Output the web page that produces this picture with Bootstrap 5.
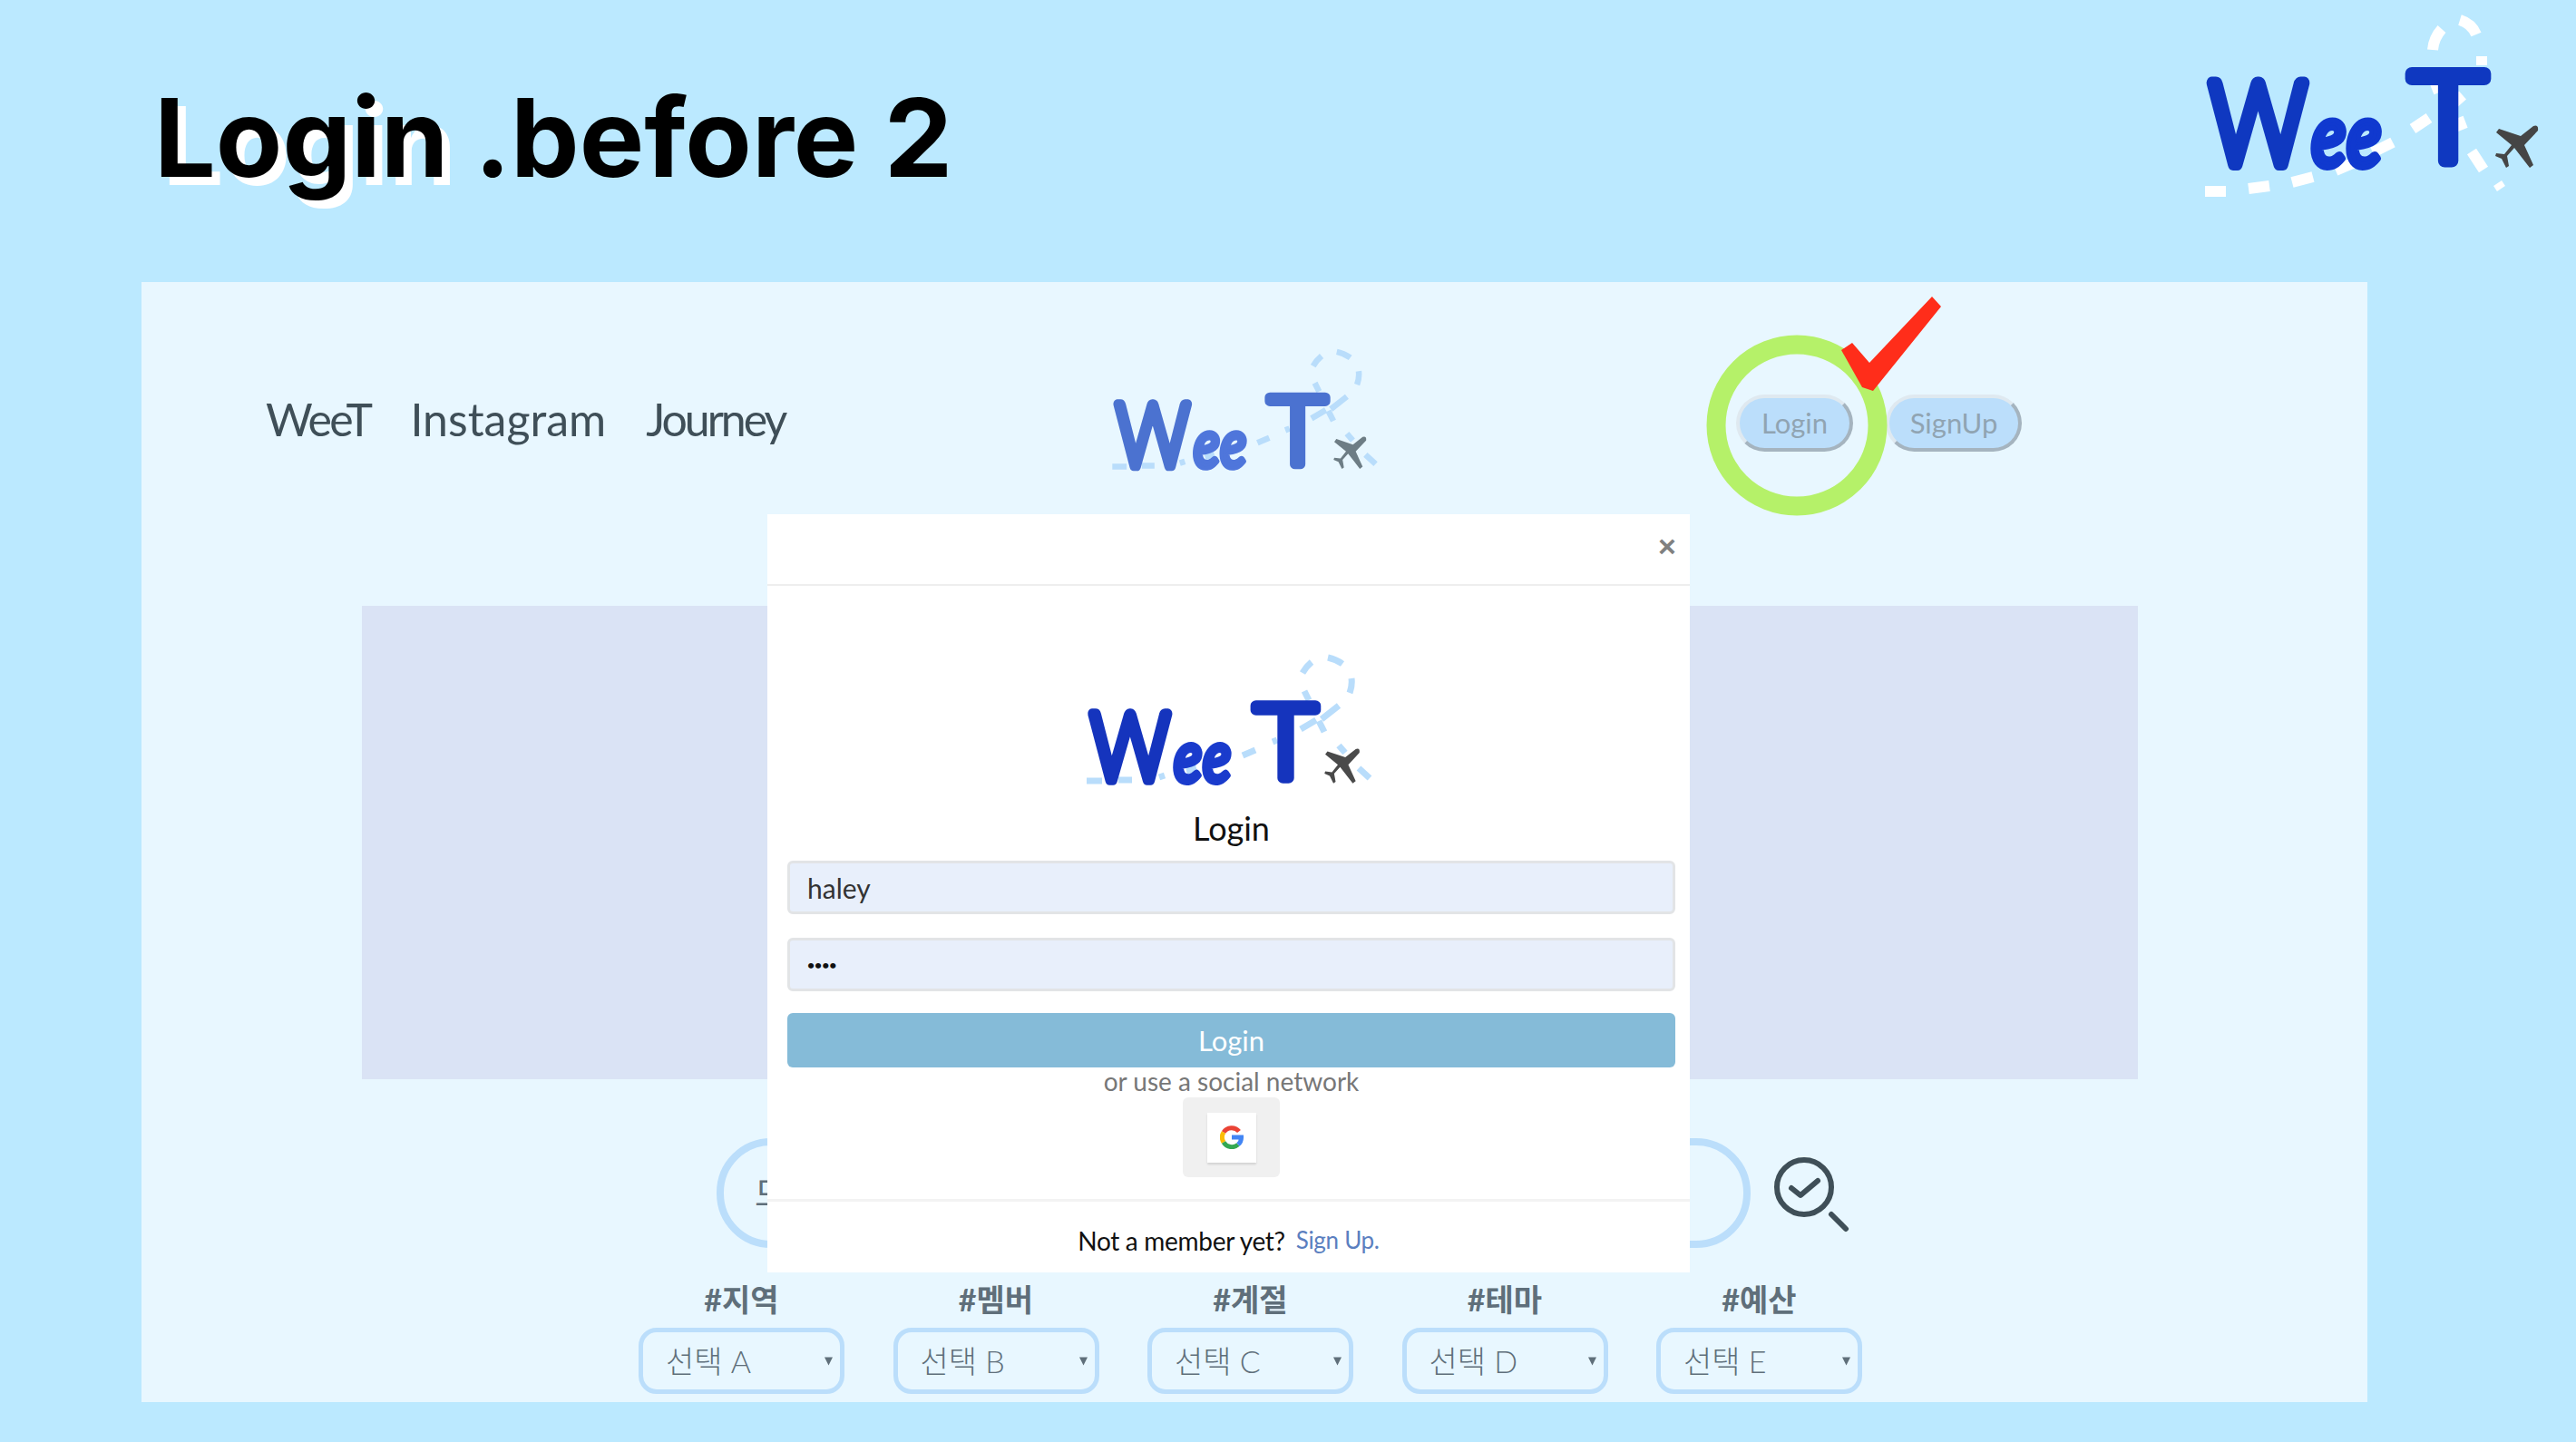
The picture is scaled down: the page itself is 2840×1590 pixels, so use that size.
<!DOCTYPE html>
<html lang="ko">

<head>
    <meta charset="UTF-8">
    <meta name="viewport" content="width=device-width, initial-scale=1.0">
    <title>Login .before 2</title>
    <link rel="stylesheet" href="https://cdn.jsdelivr.net/npm/bootstrap@5.3.2/dist/css/bootstrap.min.css">
    <script src="https://cdn.jsdelivr.net/npm/bootstrap@5.3.2/dist/js/bootstrap.bundle.min.js"></script>
    <style>
        body { background: #bbe9ff; font-family: Lato, "Noto Sans CJK KR", sans-serif; width: 2840px; height: 1590px; overflow: hidden; }
        .slide-head { height: 311px; padding-left: 170px; padding-right: 30px; }
        .slide-title { font-family: Inter, Lato, sans-serif; font-size: 120px; font-weight: 700; line-height: 1; margin: 92px 0 0; color: #000; }
        .slide-title span { text-shadow: 9px 9px 0 #fff; }
        .head-logo { width: 390px; height: 215px; margin-top: 10px; }
        .logo-letters text { font-family: Lato, sans-serif; stroke-linejoin: round; stroke-linecap: round; }

        .panel { position: relative; width: 2454px; height: 1235px; margin-left: 156px; background: #e8f7ff; }
        .top-nav { padding: 72px 0 0 137px; }
        .nav-links { width: 924px; padding-top: 49px; gap: 44px; }
        .nav-links a { font-size: 50px; line-height: 60px; color: #3f4f58; text-decoration: none; }
        .nav-links .tight-a { letter-spacing: -2.5px; }
        .nav-links .tight-b { letter-spacing: -3px; }
        .mid-logo { width: 307px; height: 140px; }
        .nav-btns { margin-left: 390px; padding-top: 52px; gap: 36px; }
        .nav-btn { height: 63px; font-size: 31px; line-height: 1; padding: 0; color: #90a4b2; background: #bbdefb; border: 4px solid; border-color: #dfe9f0 #a5b4bf #a5b4bf #dfe9f0; border-radius: 32px; }
        .nav-btn-login { width: 129px; }
        .nav-btn-signup { width: 150px; }
        .marks { position: absolute; left: 1719px; top: 9px; width: 270px; height: 255px; }

        .hero { height: 522px; margin: 145px 253px 0 243px; background: #dae3f5; }
        .search-row { margin: 65px 0 0 634px; }
        .search-pill { width: 1140px; height: 121px; border: 8px solid #bbdefb; border-radius: 60px; padding-left: 34px; font-size: 38px; color: #5f6f7a; }
        .search-icon { width: 95px; height: 95px; margin: 8px 0 0 20px; }
        .filters { margin: 37px 0 0 548px; gap: 53.500px; }
        .filter-col { width: 227px; }
        .filter-label { font-size: 34px; line-height: 40px; font-weight: 700; color: #5f6f7a; text-align: center; margin-bottom: 11px; }
        .filter-select { height: 73px; font-size: 34px; font-weight: 300; color: #5f6f7a; background-color: transparent; border: 5px solid #bbdefb; border-radius: 20px; padding: 0 0 0 25px; background-size: 9px 10px; background-position: right 8px center;
            background-image: url("data:image/svg+xml,%3Csvg xmlns='http://www.w3.org/2000/svg' viewBox='0 0 10 10'%3E%3Cpath d='M0 0h10L5 10z' fill='%235f6f7a'/%3E%3C/svg%3E"); }

        .login-modal { position: absolute; left: 690px; top: 256px; width: 1017px; height: 836px; overflow: hidden; z-index: 5; }
        .login-modal .modal-dialog { margin: 0; max-width: none; }
        .login-modal .modal-content { border: 0; border-radius: 0; height: 836px; }
        .login-modal .modal-header { height: 79px; padding: 0 15px 0 0; border-bottom: 2px solid #eee; border-radius: 0; justify-content: flex-end; }
        .close-x { border: 0; background: none; padding: 0; width: 20px; font-family: "Liberation Sans", sans-serif; font-size: 34px; font-weight: 700; line-height: 1; color: #808080; margin-top: -8px; }
        .login-modal .modal-body { padding: 74px 16px 0 22px; flex: 0 0 auto; height: 679px; border-bottom: 3px solid #f3f3f3; }
        .modal-logo { display: block; width: 330px; height: 150px; margin-left: 320px; }
        .login-title { font-size: 36px; line-height: 44px; color: #111; text-align: center; margin: 21px 0 14px; }
        .login-input { height: 59px; font-size: 30px; color: #333; background: #e8effb; border: 3px solid #e2e4e6; border-radius: 6px; padding: 0 19px; margin-bottom: 26px; }
        .login-input[type=password] { font-size: 14px; letter-spacing: 0; color: #111; font-weight: 700; }
        .login-submit { height: 60px; font-size: 31px; line-height: 1; color: #fff; background: #85bbd8; border: 0; border-radius: 6px; margin-top: -2px; padding-bottom: 6px; }
        .social-note { font-size: 28px; line-height: 30px; color: #777; text-align: center; margin-bottom: 3px; }
        .google-tile { width: 107px; height: 88px; background: #f0f0f0; border-radius: 6px; margin: 0 auto; }
        .google-btn { width: 54px; height: 55px; background: #fff; box-shadow: 0 2px 2px rgba(0, 0, 0, .12); }
        .login-modal .modal-footer { height: 75px; padding: 10px 0 0; border: 0; font-size: 28px; letter-spacing: -.3px; color: #111; }
        .login-modal .modal-footer a { font-size: 26px; color: #5b7fc0; text-decoration: none; margin-left: 8px; }
    </style>
</head>

<body>
    <svg width="0" height="0" class="position-absolute">
        <defs>
            <!-- letters and plane, units are the big logo's pixels -->
            <g id="logo-letters" class="logo-letters">
                <text x="56" y="181" font-size="126" font-weight="300" textLength="107" lengthAdjust="spacingAndGlyphs" stroke-width="14" fill="var(--logo-a)" stroke="var(--logo-a)">W</text>
                <text x="168" y="184" font-size="100" font-weight="700" font-style="italic" textLength="78" lengthAdjust="spacingAndGlyphs" stroke-width="6" fill="var(--logo-b)" stroke="var(--logo-b)">ee</text>
                <text x="277" y="178" font-size="136" font-weight="300" textLength="84" lengthAdjust="spacingAndGlyphs" stroke-width="14" fill="var(--logo-a)" stroke="var(--logo-a)">T</text>
                <path fill="var(--logo-p)" d="M413 139Q419 137 418 144L403 160L413 182L409 185L392 163L384 172L386 183L383 185L378 175L371 172L372 169L381 170L389 160L372 146L375 142L399 150Z" />
            </g>
            <!-- dashes of the smaller logos -->
            <g id="logo-dashes" fill="none" stroke="#b9ddfb" stroke-width="7">
                <path d="M60 161H77M95 160H110M140 157L146 155M170 150L181 147M232 133L246 127M265 118L270 116M296 104L313 94M319 93L338 78" />
                <path d="M300 62L305 72M298 42Q302 35 308 30M326 25Q335 27 342 32M352 48Q353 56 350 64M316 95L322 107M338 122L345 130M360 147L372 158" />
            </g>
        </defs>
    </svg>

    <header class="slide-head d-flex justify-content-between align-items-start">
        <h1 class="slide-title"><span>Login</span> .before 2</h1>
        <svg class="head-logo" viewBox="40 10 390 215" style="--logo-a:#0f38c0;--logo-b:#1039cf;--logo-p:#454545">
            <g fill="none" stroke="#fff" stroke-width="12">
                <path d="M51 211H74M99 208L122 205M147 201L170 195M195 188L216 179M236 168L258 157M280 142L298 130" />
                <path d="M302 55Q303 42 312 32M332 22Q345 26 350 38M356 62V72M305 92L309 102M335 105L326 113M330 130L335 143M345 167L358 187" />
            </g>
            <path d="M371 208L380 202" stroke="#fff" stroke-width="7" />
            <use href="#logo-letters" />
        </svg>
    </header>

    <main class="panel">
        <div class="top-nav d-flex align-items-start">
            <nav class="nav-links d-flex">
                <a href="#" class="tight-a">WeeT</a>
                <a href="#">Instagram</a>
                <a href="#" class="tight-b">Journey</a>
            </nav>
            <svg class="mid-logo" viewBox="50 20 330 150" style="--logo-a:#4b72d0;--logo-b:#4f76db;--logo-p:#6d7d85">
                <use href="#logo-dashes" />
                <use href="#logo-letters" transform="translate(18 12) scale(.82)" />
            </svg>
            <div class="nav-btns d-flex">
                <button type="button" class="btn nav-btn nav-btn-login">Login</button>
                <button type="button" class="btn nav-btn nav-btn-signup">SignUp</button>
            </div>
        </div>

        <!-- green ring and red tick, both lie over the nav -->
        <svg class="marks" viewBox="0 0 270 255">
            <circle cx="106" cy="149" r="89" fill="none" stroke="#b5f169" stroke-width="21" />
            <path fill="#ff2d1a" d="M155 66L167 58L186 80L255 7L265 18L190 111L178 107Z" />
        </svg>

        <div class="hero"></div>

        <div class="search-row d-flex align-items-center">
            <div class="search-pill d-flex align-items-center">모</div>
            <svg class="search-icon" viewBox="0 0 95 95" fill="none" stroke="#3f4f58" stroke-width="6" stroke-linecap="round" stroke-linejoin="round">
                <circle cx="39" cy="37" r="30" />
                <path d="M25 38L35 46L54 30" />
                <path d="M69 67L85 83" />
            </svg>
        </div>

        <div class="filters d-flex">
            <div class="filter-col">
                <div class="filter-label">#지역</div>
                <select class="form-select filter-select"><option>선택 A</option></select>
            </div>
            <div class="filter-col">
                <div class="filter-label">#멤버</div>
                <select class="form-select filter-select"><option>선택 B</option></select>
            </div>
            <div class="filter-col">
                <div class="filter-label">#계절</div>
                <select class="form-select filter-select"><option>선택 C</option></select>
            </div>
            <div class="filter-col">
                <div class="filter-label">#테마</div>
                <select class="form-select filter-select"><option>선택 D</option></select>
            </div>
            <div class="filter-col">
                <div class="filter-label">#예산</div>
                <select class="form-select filter-select"><option>선택 E</option></select>
            </div>
        </div>

        <!-- Login modal, shown open -->
        <div class="modal d-block login-modal" tabindex="-1">
            <div class="modal-dialog">
                <div class="modal-content">
                    <div class="modal-header">
                        <button type="button" class="close-x" aria-label="Close">×</button>
                    </div>
                    <div class="modal-body">
                        <svg class="modal-logo" viewBox="50 20 330 150" style="--logo-a:#1534bd;--logo-b:#1a3bcc;--logo-p:#4a4a4a">
                            <use href="#logo-dashes" />
                            <use href="#logo-letters" transform="translate(18 12) scale(.82)" />
                        </svg>
                        <div class="login-title">Login</div>
                        <form>
                            <input type="text" class="form-control login-input" value="haley">
                            <input type="password" class="form-control login-input" value="1234">
                            <button type="button" class="btn w-100 login-submit">Login</button>
                        </form>
                        <div class="social-note">or use a social network</div>
                        <div class="google-tile d-flex align-items-center justify-content-center">
                            <div class="google-btn d-flex align-items-center justify-content-center">
                                <svg width="26" height="26" viewBox="0 0 26 26" fill="none" stroke-width="5">
                                    <path d="M21 6.5A10.500 10.500 0 0 0 4 7.500" stroke="#ea4335" />
                                    <path d="M4 7.500A10.500 10.500 0 0 0 4 18.500" stroke="#fbbc05" />
                                    <path d="M4 18.500A10.500 10.500 0 0 0 20 21" stroke="#34a853" />
                                    <path d="M20 21A10.500 10.500 0 0 0 23.500 13H13" stroke="#4285f4" />
                                </svg>
                            </div>
                        </div>
                    </div>
                    <div class="modal-footer justify-content-center">
                        <span>Not a member yet?</span><a href="#">Sign Up.</a>
                    </div>
                </div>
            </div>
        </div>
    </main>
</body>

</html>
